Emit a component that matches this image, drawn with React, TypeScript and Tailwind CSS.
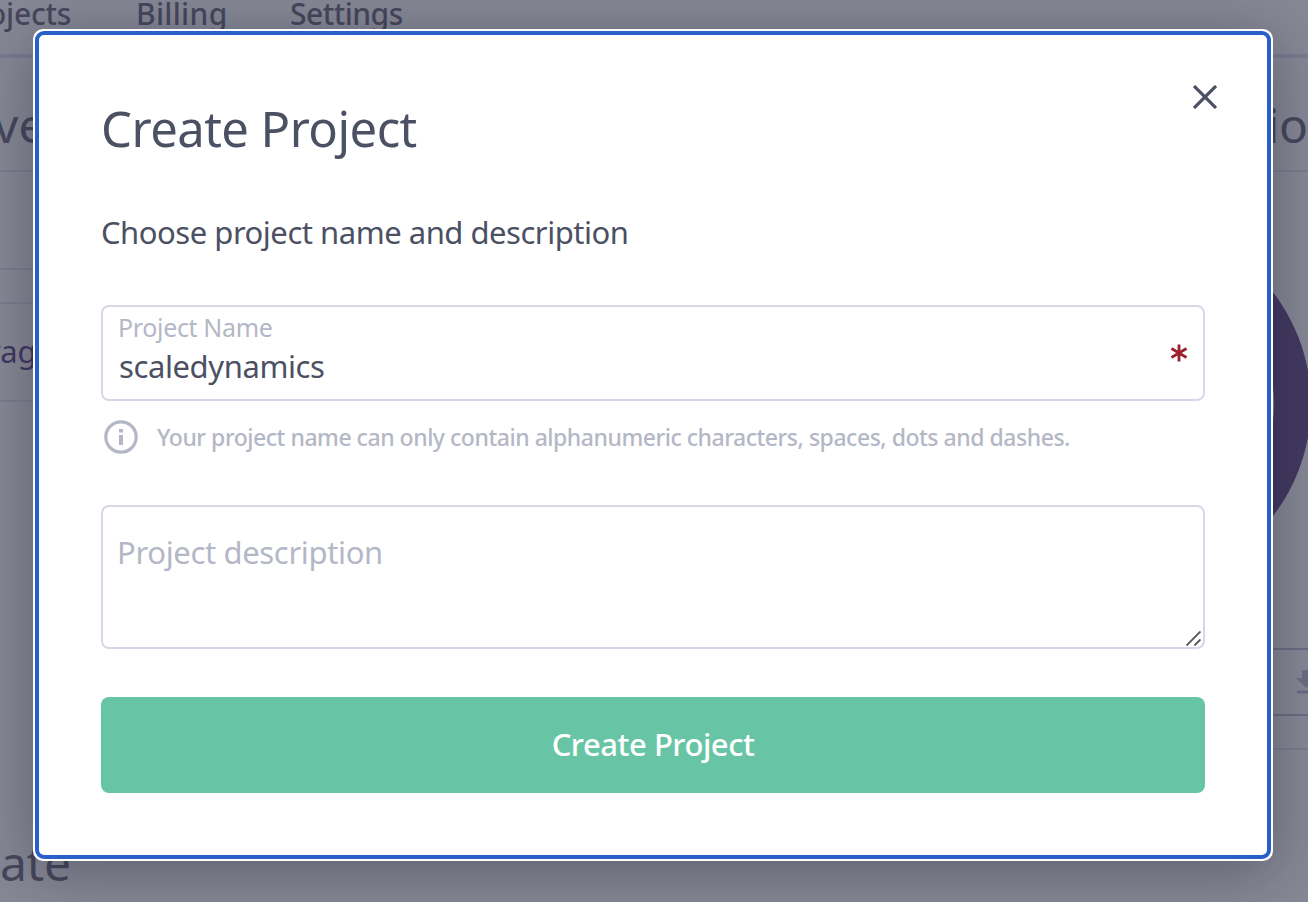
import type { ReactNode } from "react";

function Rule({ className }: { className: string }) {
  return <div className={`h-[2px] shrink-0 bg-[#e3e4ee] ${className}`} />;
}

function Line({ className, children }: { className: string; children: ReactNode }) {
  return <span className={`block shrink-0 whitespace-nowrap ${className}`}>{children}</span>;
}

function Dashboard() {
  return (
    <div className="flex h-full flex-col">
      <nav className="flex h-[58px] shrink-0 border-b-4 border-[#dcdef0] text-[30px] font-medium leading-[28px] tracking-[-0.2px] text-[#54566c]">
        <Line className="-ml-[42px] w-[178px]">Projects</Line>
        <Line className="w-[154px] tracking-[0.3px]">Billing</Line>
        <Line className="tracking-[-0.5px]">Settings</Line>
      </nav>
      <div className="flex min-h-0 grow justify-between">
        <div className="flex w-[100px] flex-col">
          <Line className="-ml-[6px] mt-[35px] h-[77px] text-[48px] leading-[64px] text-[#54566c]">ve</Line>
          <Rule className="" />
          <Rule className="mt-[96px]" />
          <Rule className="mt-[32px]" />
          <Line className="-ml-[12px] mt-[27px] h-[69px] text-[31px] leading-[40px] text-[#452a76]">rage</Line>
          <Rule className="" />
          <Line className="mt-[429px] text-[48px] leading-[64px] tracking-[-0.1px] text-[#54566c]">ate</Line>
        </div>
        <div className="flex w-[40px] flex-col">
          <Line className="-ml-px mt-[35px] h-[77px] text-[48px] leading-[64px] tracking-[-0.5px] text-[#54566c]">ion</Line>
          <Rule className="" />
          <div className="mt-[48px] flex h-[368px] justify-end">
            <svg className="h-[368px] w-[40px]" viewBox="0 0 40 368">
              <circle cx="-141" cy="184" r="165.5" fill="none" stroke="#4c3078" strokeWidth="37" />
            </svg>
          </div>
          <div className="mt-[60px] flex h-[68px] shrink-0 items-center border-y-2 border-[#b5b8d4] pl-[28px]">
            <svg className="h-[24px] w-[20px] shrink-0" viewBox="0 0 20 24" fill="#b5b8d4">
              <path d="M6 0h8v8h6L10 18 0 8h6zM1 20.500h19v3H1z" />
            </svg>
          </div>
          <Rule className="mt-[32px]" />
        </div>
      </div>
    </div>
  );
}

function CreateProjectDialog() {
  return (
    <div className="flex h-[832px] w-[1240px] flex-col rounded-[10px] border-2 border-white bg-white shadow-[0_10px_60px_rgba(20,22,40,0.36)]">
      <div className="flex grow flex-col rounded-[9px] border-4 border-[#295fc9] px-[62px]">
        <header className="flex h-[143px] justify-between">
          <h1 className="mt-[61px] whitespace-nowrap text-[49px] leading-[64px] tracking-[-0.55px] text-[#4b5063]">
            Create Project
          </h1>
          <button aria-label="Close" className="-mr-[12px] mt-[50px] size-[24px]">
            <svg className="size-[24px]" viewBox="0 0 24 24" fill="none" stroke="#4b5063" strokeWidth="3.2">
              <path d="M1 1 23 23M23 1 1 23" />
            </svg>
          </button>
        </header>
        <p className="mt-[34px] h-[93px] whitespace-nowrap text-[31px] leading-[40px] tracking-[-0.48px] text-[#4b5063]">
          Choose project name and description
        </p>
        <div className="flex h-[96px] shrink-0 items-start justify-between rounded-[8px] border-2 border-[#d5d8e7] pl-[15px] pr-[15px]">
          <div className="flex flex-col whitespace-nowrap">
            <label className="mt-[3px] text-[25px] leading-[34px] tracking-[-0.35px] text-[#b4b7c6]">Project Name</label>
            <span className="ml-px mt-px text-[31px] leading-[42px] tracking-[-0.4px] text-[#4b5063]">scaledynamics</span>
          </div>
          <svg className="mt-[37px] size-[18px]" viewBox="0 0 18 18" fill="none" stroke="#98212d" strokeWidth="2.8">
            <path d="M9 .5v17M1.500 4.500l15 9M16.500 4.500l-15 9" />
          </svg>
        </div>
        <div className="mt-[19px] flex h-[34px] shrink-0 items-center">
          <svg className="ml-[3px] size-[34px]" viewBox="0 0 34 34" fill="#b4b7c6">
            <circle cx="17" cy="17" r="15.2" fill="none" stroke="#b4b7c6" strokeWidth="3.2" />
            <path d="M15 9h4v3.500h-4zM15 15h4v10h-4z" />
          </svg>
          <span className="-mt-px ml-[19px] whitespace-nowrap text-[23px] font-medium leading-[34px] tracking-[-0.47px] text-[#b4b7c6]">
            Your project name can only contain alphanumeric characters, spaces, dots and dashes.
          </span>
        </div>
        <div className="mt-[51px] flex h-[144px] shrink-0 items-end justify-between rounded-[8px] border-2 border-[#d5d8e7] pl-[14px]">
          <span className="mb-[75px] whitespace-nowrap text-[31px] leading-[40px] tracking-[-0.35px] text-[#b4b7c6]">
            Project description
          </span>
          <svg className="mb-px mr-[2px] size-[15px]" viewBox="0 0 15 15" fill="none" stroke="#555" strokeWidth="1.9">
            <path d="M.5 14.500l14-14M8.500 14.500l6-6" />
          </svg>
        </div>
        <button className="mt-[48px] flex h-[96px] shrink-0 items-center justify-center rounded-[8px] bg-[#67c5a6] pb-px text-[31px] font-medium tracking-[-0.45px] text-white">
          Create Project
        </button>
      </div>
    </div>
  );
}

export default function App() {
  return (
    <div className="relative h-[902px] w-[1308px] overflow-hidden bg-white font-['Noto_Sans',sans-serif]">
      <Dashboard />
      <div className="absolute inset-0 flex bg-[#3d3f54]/62 pl-[33px] pt-[29px]">
        <CreateProjectDialog />
      </div>
    </div>
  );
}
